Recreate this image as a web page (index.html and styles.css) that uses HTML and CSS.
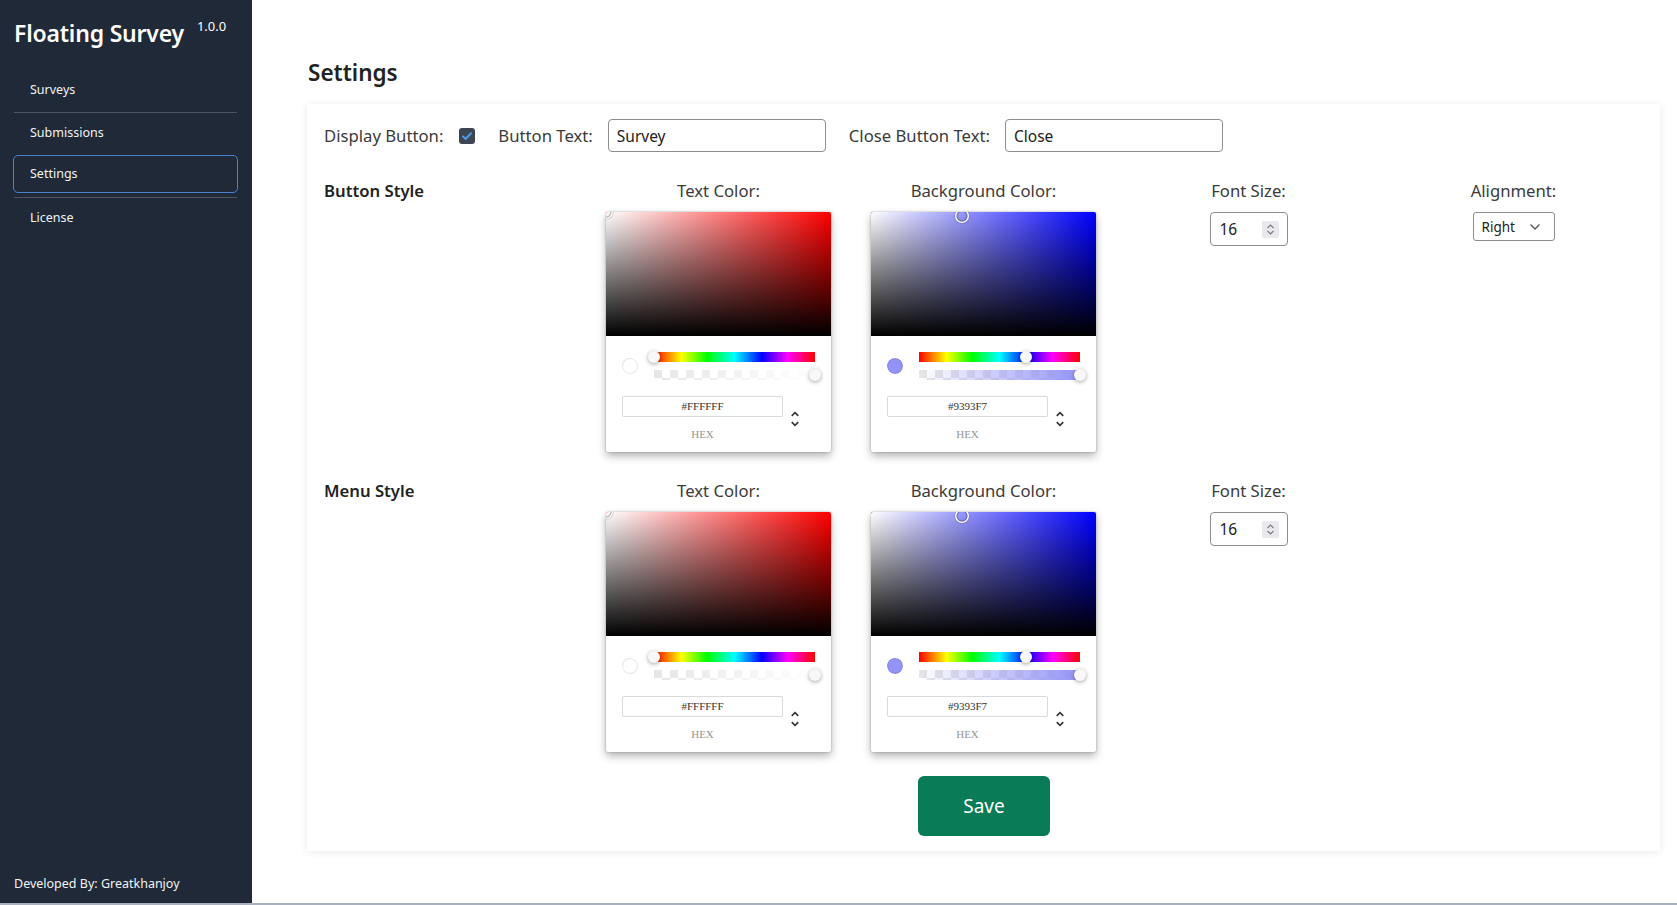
FILE: index.html
```html
<!DOCTYPE html>
<html lang="en">
<head>
<meta charset="utf-8">
<title>Floating Survey - Settings</title>
<link rel="stylesheet" href="styles.css">
</head>
<body>
<div class="app">
  <aside class="sidebar">
    <div class="brand">
      <span class="brand-name">Floating Survey</span>
      <span class="brand-version">1.0.0</span>
    </div>
    <nav class="nav">
      <a class="nav-item nav-first">Surveys</a>
      <a class="nav-item">Submissions</a>
      <a class="nav-item active">Settings</a>
      <a class="nav-item">License</a>
    </nav>
    <div class="credit">Developed By: Greatkhanjoy</div>
  </aside>

  <main class="main">
    <h1 class="page-title">Settings</h1>
    <section class="card">
      <div class="top-row">
        <span class="field-label">Display Button:</span>
        <span class="checkbox">
          <svg viewBox="0 0 16 16" width="16" height="16"><rect x="0" y="0" width="16" height="16" rx="3" fill="#3d4553"/><path d="M4 8.4l2.6 2.6L12 5.2" fill="none" stroke="#4e9bea" stroke-width="2" stroke-linecap="round" stroke-linejoin="round"/></svg>
        </span>
        <span class="field-label gap-left">Button Text:</span>
        <input class="text-input" type="text" value="Survey">
        <span class="field-label gap-left">Close Button Text:</span>
        <input class="text-input" type="text" value="Close">
      </div>

      <div class="style-grid">
        <!-- Button style row -->
        <div class="section-title">Button Style</div>
        <div class="col">
          <div class="col-title">Text Color:</div>
          <div class="picker">
            <div class="sat sat-red">
              <div class="sat-white"></div><div class="sat-black"></div>
              <div class="sat-pointer" style="left:0%;top:0%"></div>
            </div>
            <div class="picker-body">
              <div class="controls">
                <div class="swatch-col"><div class="swatch checker"><div class="swatch-fill" style="background:#FFFFFF"></div></div></div>
                <div class="sliders">
                  <div class="hue"><div class="thumb" style="left:0%"></div></div>
                  <div class="alpha checker"><div class="alpha-grad alpha-white"></div><div class="thumb" style="left:100%"></div></div>
                </div>
              </div>
              <div class="fields">
                <div class="field"><div class="hex-input">#FFFFFF</div><div class="hex-label">hex</div></div>
                <div class="toggle"><svg viewBox="0 0 24 24" width="20" height="20"><path fill="#333" d="M12,18.17L8.83,15L7.42,16.41L12,21L16.59,16.41L15.17,15M12,5.83L15.17,9L16.58,7.59L12,3L7.41,7.59L8.83,9L12,5.83Z"/></svg></div>
              </div>
            </div>
          </div>
        </div>
        <div class="col">
          <div class="col-title">Background Color:</div>
          <div class="picker">
            <div class="sat sat-blue">
              <div class="sat-white"></div><div class="sat-black"></div>
              <div class="sat-pointer" style="left:40.5%;top:3.1%"></div>
            </div>
            <div class="picker-body">
              <div class="controls">
                <div class="swatch-col"><div class="swatch checker"><div class="swatch-fill" style="background:#9393F7"></div></div></div>
                <div class="sliders">
                  <div class="hue"><div class="thumb" style="left:66.7%"></div></div>
                  <div class="alpha checker"><div class="alpha-grad alpha-violet"></div><div class="thumb" style="left:100%"></div></div>
                </div>
              </div>
              <div class="fields">
                <div class="field"><div class="hex-input">#9393F7</div><div class="hex-label">hex</div></div>
                <div class="toggle"><svg viewBox="0 0 24 24" width="20" height="20"><path fill="#333" d="M12,18.17L8.83,15L7.42,16.41L12,21L16.59,16.41L15.17,15M12,5.83L15.17,9L16.58,7.59L12,3L7.41,7.59L8.83,9L12,5.83Z"/></svg></div>
              </div>
            </div>
          </div>
        </div>
        <div class="col">
          <div class="col-title">Font Size:</div>
          <div class="number-input">
            <span class="number-value">16</span>
            <span class="spinner"><svg viewBox="0 0 17 17" width="17" height="17"><path d="M5.5 7l3-3 3 3M5.5 10l3 3 3-3" fill="none" stroke="#7a7a80" stroke-width="1.1"/></svg></span>
          </div>
        </div>
        <div class="col">
          <div class="col-title">Alignment:</div>
          <div class="select">
            <span class="select-value">Right</span>
            <svg class="select-chevron" viewBox="0 0 12 8" width="12" height="8"><path d="M1.5 1.5l4.5 4.5 4.5-4.5" fill="none" stroke="#555" stroke-width="1.3"/></svg>
          </div>
        </div>

        <!-- Menu style row -->
        <div class="section-title">Menu Style</div>
        <div class="col">
          <div class="col-title">Text Color:</div>
          <div class="picker">
            <div class="sat sat-red">
              <div class="sat-white"></div><div class="sat-black"></div>
              <div class="sat-pointer" style="left:0%;top:0%"></div>
            </div>
            <div class="picker-body">
              <div class="controls">
                <div class="swatch-col"><div class="swatch checker"><div class="swatch-fill" style="background:#FFFFFF"></div></div></div>
                <div class="sliders">
                  <div class="hue"><div class="thumb" style="left:0%"></div></div>
                  <div class="alpha checker"><div class="alpha-grad alpha-white"></div><div class="thumb" style="left:100%"></div></div>
                </div>
              </div>
              <div class="fields">
                <div class="field"><div class="hex-input">#FFFFFF</div><div class="hex-label">hex</div></div>
                <div class="toggle"><svg viewBox="0 0 24 24" width="20" height="20"><path fill="#333" d="M12,18.17L8.83,15L7.42,16.41L12,21L16.59,16.41L15.17,15M12,5.83L15.17,9L16.58,7.59L12,3L7.41,7.59L8.83,9L12,5.83Z"/></svg></div>
              </div>
            </div>
          </div>
        </div>
        <div class="col">
          <div class="col-title">Background Color:</div>
          <div class="picker">
            <div class="sat sat-blue">
              <div class="sat-white"></div><div class="sat-black"></div>
              <div class="sat-pointer" style="left:40.5%;top:3.1%"></div>
            </div>
            <div class="picker-body">
              <div class="controls">
                <div class="swatch-col"><div class="swatch checker"><div class="swatch-fill" style="background:#9393F7"></div></div></div>
                <div class="sliders">
                  <div class="hue"><div class="thumb" style="left:66.7%"></div></div>
                  <div class="alpha checker"><div class="alpha-grad alpha-violet"></div><div class="thumb" style="left:100%"></div></div>
                </div>
              </div>
              <div class="fields">
                <div class="field"><div class="hex-input">#9393F7</div><div class="hex-label">hex</div></div>
                <div class="toggle"><svg viewBox="0 0 24 24" width="20" height="20"><path fill="#333" d="M12,18.17L8.83,15L7.42,16.41L12,21L16.59,16.41L15.17,15M12,5.83L15.17,9L16.58,7.59L12,3L7.41,7.59L8.83,9L12,5.83Z"/></svg></div>
              </div>
            </div>
          </div>
        </div>
        <div class="col">
          <div class="col-title">Font Size:</div>
          <div class="number-input">
            <span class="number-value">16</span>
            <span class="spinner"><svg viewBox="0 0 17 17" width="17" height="17"><path d="M5.5 7l3-3 3 3M5.5 10l3 3 3-3" fill="none" stroke="#7a7a80" stroke-width="1.1"/></svg></span>
          </div>
        </div>
        <div class="col"></div>
      </div>

      <div class="actions">
        <button class="save-btn" type="button">Save</button>
      </div>
    </section>
  </main>
</div>
</body>
</html>
```

FILE: styles.css
```css
* { box-sizing: border-box; }

html, body {
  margin: 0;
  padding: 0;
}

body {
  font-family: "Noto Sans", "Open Sans", sans-serif;
  background: #fff;
  color: #222;
  width: 1677px;
  height: 905px;
  overflow: hidden;
}

.app {
  display: flex;
  height: 905px;
  border-bottom: 2px solid #a9b0be;
}

/* ---------- Sidebar ---------- */
.sidebar {
  width: 252px;
  flex: none;
  background: #1f2937;
  color: #fff;
  display: flex;
  flex-direction: column;
  padding: 17px 15px 10px 14px;
}

.brand {
  display: flex;
  align-items: flex-start;
  height: 32px;
}

.brand-name {
  font-size: 23px;
  font-weight: 600;
  line-height: 32px;
  letter-spacing: -0.2px;
}

.brand-version {
  font-size: 13px;
  line-height: 18px;
  margin-left: 13px;
  margin-top: 0;
}

.nav {
  margin-top: 19px;
  display: flex;
  flex-direction: column;
}

.nav-item {
  display: block;
  height: 43px;
  line-height: 40px;
  padding-left: 16px;
  font-size: 12.5px;
  color: #f1f3f6;
  border-top: 1px solid #4b5563;
}

.nav-item.nav-first {
  border-top: none;
  height: 44px;
  line-height: 44px;
}

.nav-item.active {
  height: 38px;
  line-height: 36px;
  border: 1px solid #4a83c9;
  border-radius: 5px;
  margin: 0 -1px 4px -1px;
  padding-left: 16px;
}

.credit {
  margin-top: auto;
  font-size: 12.5px;
  line-height: 18px;
  color: #f1f3f6;
}

/* ---------- Main ---------- */
.main {
  flex: 1;
  padding: 57px 17px 0 55px;
}

.page-title {
  margin: 0 0 15px 1px;
  font-size: 22.5px;
  font-weight: 600;
  line-height: 32px;
  color: #222;
}

.card {
  background: #fff;
  box-shadow: 0 1px 8px rgba(0, 0, 0, 0.09);
  padding: 15px 16px 15px 17px;
}

.top-row {
  display: flex;
  align-items: center;
  height: 33px;
}

.field-label {
  font-size: 16.7px;
  color: #3b3b3b;
  margin-right: 15px;
}

.gap-left {
  margin-left: 23px;
}

.checkbox {
  display: inline-flex;
  width: 16px;
  height: 16px;
  margin-left: 1px;
}

.text-input {
  width: 218px;
  height: 33px;
  border: 1px solid #8d8d8d;
  border-radius: 4px;
  padding: 0 8px;
  font-family: inherit;
  font-size: 15.5px;
  color: #222;
  background: #fff;
  outline: none;
}

/* ---------- Style grid ---------- */
.style-grid {
  display: grid;
  grid-template-columns: repeat(5, 1fr);
  row-gap: 28px;
  margin: 28px -2px 0 -3px;
}

.section-title {
  font-size: 16.7px;
  font-weight: 600;
  line-height: 22px;
  color: #222;
  padding-left: 3px;
}

.col {
  display: flex;
  flex-direction: column;
  align-items: center;
}

.col-title {
  font-size: 16.7px;
  line-height: 22px;
  margin-bottom: 10px;
  color: #3b3b3b;
}

/* ---------- Color picker ---------- */
.picker {
  width: 225px;
  background: #fff;
  border-radius: 2px;
  box-shadow: 0 0 2px rgba(0, 0, 0, 0.3), 0 4px 8px rgba(0, 0, 0, 0.3);
  font-family: "Liberation Serif", serif;
}

.sat {
  position: relative;
  height: 124px;
  border-radius: 2px 2px 0 0;
  overflow: hidden;
}

.sat-red { background: #ff0000; }
.sat-blue { background: #0000ff; }

.sat-white,
.sat-black {
  position: absolute;
  inset: 0;
}

.sat-white { background: linear-gradient(to right, #fff, rgba(255, 255, 255, 0)); }
.sat-black { background: linear-gradient(to top, #000, rgba(0, 0, 0, 0)); }

.sat-pointer {
  position: absolute;
  width: 11px;
  height: 11px;
  border-radius: 50%;
  transform: translate(-50%, -50%);
  box-shadow: 0 0 0 1.5px #fff, inset 0 0 1px 1px rgba(0, 0, 0, 0.3), 0 0 1px 2px rgba(0, 0, 0, 0.25);
}

.picker-body {
  padding: 16px 16px 12px;
}

.controls {
  display: flex;
}

.swatch-col {
  width: 32px;
  flex: none;
}

.checker {
  background-color: #fff;
  background-image: conic-gradient(#fff 0 25%, #e6e6e6 0 50%, #fff 0 75%, #e6e6e6 0);
  background-size: 16px 16px;
}

.swatch {
  position: relative;
  width: 16px;
  height: 16px;
  margin-top: 6px;
  border-radius: 8px;
  overflow: hidden;
}

.swatch-fill {
  position: absolute;
  inset: 0;
  border-radius: 8px;
  box-shadow: inset 0 0 0 1px rgba(0, 0, 0, 0.1);
}

.sliders {
  flex: 1;
}

.hue {
  position: relative;
  height: 10px;
  margin-bottom: 8px;
  background: linear-gradient(to right, #f00 0%, #ff0 17%, #0f0 33%, #0ff 50%, #00f 67%, #f0f 83%, #f00 100%);
}

.alpha {
  position: relative;
  height: 10px;
}

.alpha-grad {
  position: absolute;
  inset: 0;
}

.alpha-white { background: linear-gradient(to right, rgba(255, 255, 255, 0), #fff); }
.alpha-violet { background: linear-gradient(to right, rgba(147, 147, 247, 0), #9393f7); }

.thumb {
  position: absolute;
  top: 0;
  width: 12px;
  height: 12px;
  border-radius: 6px;
  transform: translate(-6px, -1px);
  background: #f8f8f8;
  box-shadow: 0 1px 4px 0 rgba(0, 0, 0, 0.37);
}

.fields {
  display: flex;
  padding-top: 16px;
}

.field {
  flex: 1;
}

.hex-input {
  height: 21px;
  line-height: 21px;
  border-radius: 2px;
  box-shadow: inset 0 0 0 1px #dadada;
  text-align: center;
  font-size: 11px;
  color: #333;
}

.hex-label {
  text-transform: uppercase;
  font-size: 11px;
  line-height: 11px;
  color: #969696;
  text-align: center;
  margin-top: 12px;
}

.toggle {
  width: 32px;
  flex: none;
  padding: 13px 0 0 2px;
}

.toggle svg { display: block; }

/* ---------- Number input / select ---------- */
.number-input {
  width: 78px;
  height: 34px;
  border: 1px solid #8d8d8d;
  border-radius: 4px;
  display: flex;
  align-items: center;
  justify-content: space-between;
  padding: 0 8px 0 9px;
  font-size: 15.5px;
  color: #222;
}

.spinner {
  width: 17px;
  height: 17px;
  background: #e9e9ed;
  border-radius: 2px;
  display: flex;
}

.select {
  width: 82px;
  height: 29px;
  border: 1px solid #8d8d8d;
  border-radius: 3px;
  display: flex;
  align-items: center;
  justify-content: space-between;
  padding: 0 13px 0 8px;
  font-size: 13.5px;
  color: #222;
}

.select-chevron { display: block; }

/* ---------- Save ---------- */
.actions {
  display: flex;
  justify-content: center;
  margin-top: 24px;
}

.save-btn {
  width: 132px;
  height: 60px;
  border: none;
  border-radius: 6px;
  background: #097b57;
  color: #fff;
  font-family: inherit;
  font-size: 19px;
}
```
